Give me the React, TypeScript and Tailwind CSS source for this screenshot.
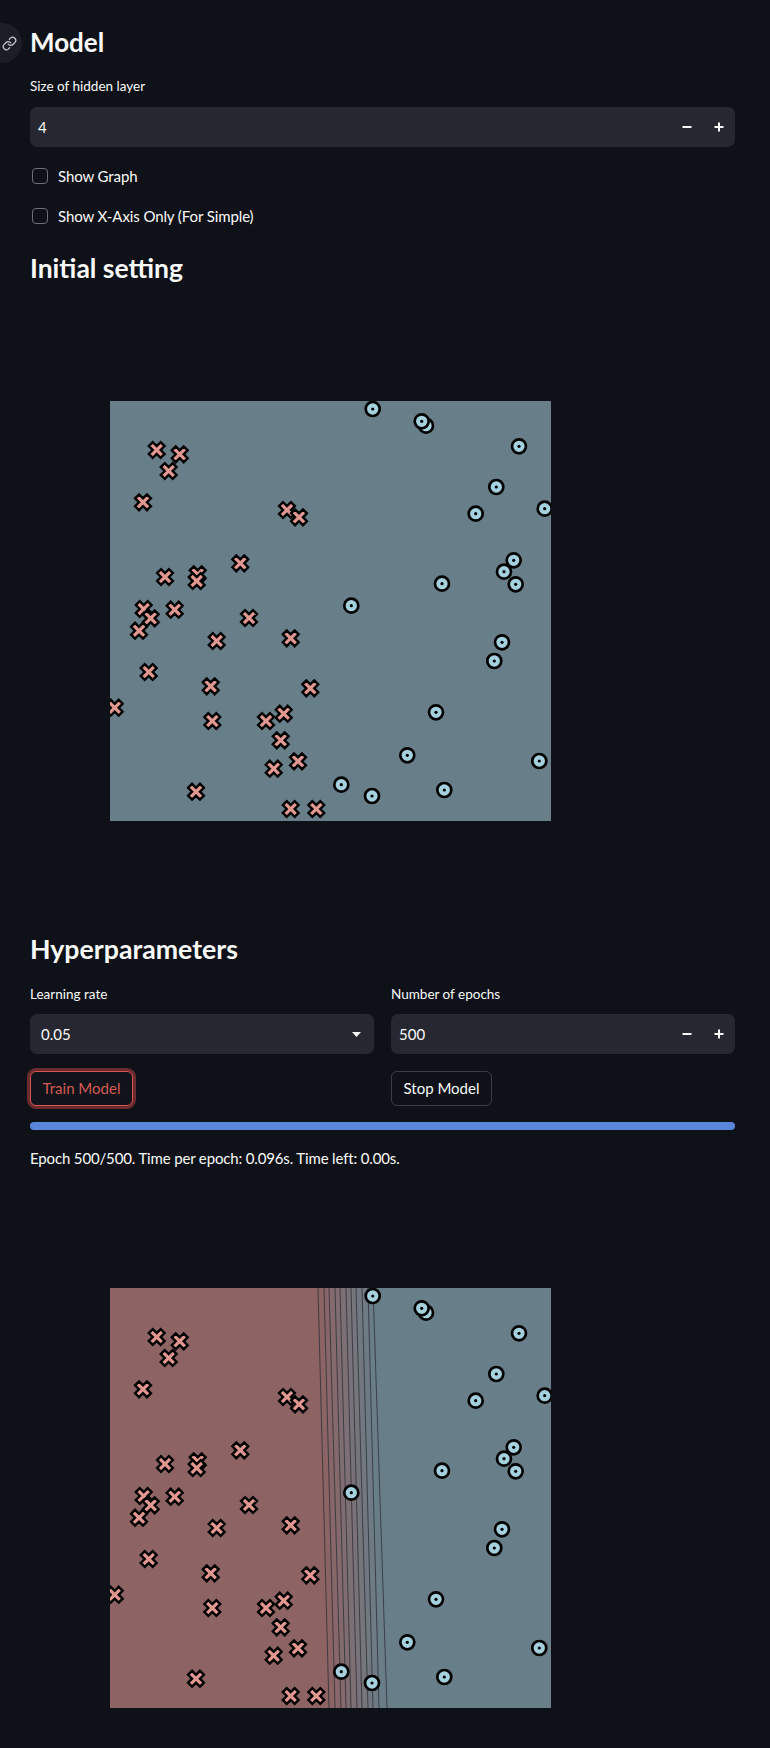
import React from "react";
import { Link } from "lucide-react";

const circles: [number, number][] = [
  [262.7, 8],
  [316, 24.7],
  [311.7, 20.3],
  [409, 45.3],
  [386.3, 86],
  [434.7, 107.7],
  [365.7, 112.7],
  [403.7, 159.3],
  [394, 170.7],
  [405.7, 183.3],
  [332, 182.7],
  [241.3, 204.7],
  [392, 241.3],
  [384.3, 260],
  [326, 311.3],
  [297.3, 354.3],
  [429.3, 360],
  [231.3, 383.7],
  [262, 395],
  [334.3, 389],
];

const crosses: [number, number][] = [
  [46.7, 49],
  [69.7, 53.3],
  [58.7, 70],
  [33, 101.3],
  [177, 109],
  [189, 116.3],
  [130.3, 162.3],
  [55, 176],
  [87.7, 173.3],
  [86.7, 180],
  [33.7, 208],
  [40.7, 217.3],
  [64.7, 208.7],
  [29, 229.7],
  [139, 217],
  [106.7, 240],
  [180.7, 237.3],
  [38.7, 271],
  [100.7, 285.3],
  [200.3, 287.3],
  [4.7, 306.7],
  [102.3, 320],
  [173.7, 312.7],
  [156, 320],
  [170.7, 339.3],
  [188, 360.3],
  [163.7, 367.7],
  [86, 390.7],
  [180.7, 408],
  [206.3, 408],
];

const R = 8.4;
const A = 2.8;
const plusPts: [number, number][] = [
  [-A, R], [A, R], [A, A], [R, A], [R, -A], [A, -A],
  [A, -R], [-A, -R], [-A, -A], [-R, -A], [-R, A], [-A, A],
];
const xPts = plusPts
  .map(([x, y]) => `${((x - y) / Math.SQRT2).toFixed(2)},${((x + y) / Math.SQRT2).toFixed(2)}`)
  .join(" ");

const TOP = [208, 214, 219, 225, 230, 236, 241, 246, 252, 258, 263];
const BOT = [219, 225, 231, 236, 241, 247, 252, 258, 263, 269, 277];
const RED = [141, 99, 99];
const BLUE = [104, 127, 138];
const mix = (t: number) =>
  `rgb(${RED.map((r, i) => Math.round(r + (BLUE[i] - r) * t)).join(",")})`;

function Plot({ boundary }: { boundary: boolean }) {
  const id = boundary ? "clipB" : "clipA";
  return (
    <svg width={441} height={420} viewBox="0 0 441 420" className="block">
      <defs>
        <clipPath id={id}>
          <rect x={0} y={0} width={441} height={420} />
        </clipPath>
      </defs>
      <g clipPath={`url(#${id})`}>
        <rect x={0} y={0} width={441} height={420} fill="#687f8a" />
        {boundary && (
          <g>
            <polygon points={`0,0 ${TOP[0]},0 ${BOT[0]},420 0,420`} fill={mix(0)} />
            {TOP.slice(0, -1).map((t, i) => (
              <polygon
                key={i}
                points={`${t},0 ${TOP[i + 1]},0 ${BOT[i + 1]},420 ${BOT[i]},420`}
                fill={mix((i + 0.5) / (TOP.length - 1))}
              />
            ))}
            {TOP.map((t, i) => (
              <line
                key={i}
                x1={t}
                y1={0}
                x2={BOT[i]}
                y2={420}
                stroke="rgba(35,35,40,0.75)"
                strokeWidth={0.9}
              />
            ))}
          </g>
        )}
        {crosses.map(([x, y], i) => (
          <polygon
            key={i}
            points={xPts}
            transform={`translate(${x},${y})`}
            fill="#e29891"
            stroke="#000"
            strokeWidth={2.4}
            strokeLinejoin="miter"
          />
        ))}
        {circles.map(([x, y], i) => (
          <g key={i}>
            <circle cx={x} cy={y} r={7} fill="#a5d1df" stroke="#000" strokeWidth={2.7} />
            <circle cx={x} cy={y} r={1.6} fill="#000" />
          </g>
        ))}
      </g>
    </svg>
  );
}

function Checkbox({ label }: { label: string }) {
  return (
    <div className="flex h-[24px] items-center gap-[10px]">
      <div className="ml-[2px] h-[16px] w-[16px] rounded-[4px] border border-[#6c6f78] bg-[#0e1117]" />
      <span className="text-[15px] leading-[24px] tracking-[-0.1px]">{label}</span>
    </div>
  );
}

function Stepper() {
  return (
    <div className="flex h-full items-center">
      <div className="flex h-full w-[32px] items-center justify-center">
        <svg width="10" height="10" viewBox="0 0 10 10">
          <rect x="0.5" y="4" width="9" height="2" fill="#fafafa" />
        </svg>
      </div>
      <div className="flex h-full w-[32px] items-center justify-center">
        <svg width="10" height="10" viewBox="0 0 10 10">
          <rect x="0.5" y="4" width="9" height="2" fill="#fafafa" />
          <rect x="4" y="0.5" width="2" height="9" fill="#fafafa" />
        </svg>
      </div>
    </div>
  );
}

export default function App() {
  return (
    <div className="relative min-h-[1748px] w-[770px] overflow-hidden bg-[#0e1117] font-['Lato','Noto_Sans',sans-serif] text-[#fafafa]">
      <div className="absolute left-[-18px] top-[23px] flex h-[40px] w-[40px] items-center justify-center rounded-full bg-[#1b1e26]">
        <Link size={15} strokeWidth={2} className="ml-[14px] text-[#c9cbd0]" />
      </div>
      <div className="flex w-[735px] flex-col pl-[30px]">
        <h2 className="mt-[22px] h-[40px] text-[26px] font-bold leading-[40px]">Model</h2>
        <div className="mt-[14px] h-[20px] text-[13.5px] leading-[20px]">Size of hidden layer</div>
        <div className="mt-[11px] flex h-[40px] items-center justify-between rounded-[7px] bg-[#262730]">
          <span className="pl-[8px] text-[15px]">4</span>
          <Stepper />
        </div>
        <div className="mt-[17px] flex flex-col gap-[16px]">
          <Checkbox label="Show Graph" />
          <Checkbox label="Show X-Axis Only (For Simple)" />
        </div>
        <h3 className="mt-[22px] h-[36px] text-[26.5px] font-bold leading-[36px]">Initial setting</h3>
        <div className="ml-[80px] mt-[115px]">
          <Plot boundary={false} />
        </div>
        <h2 className="mt-[108px] h-[40px] text-[26.7px] font-bold leading-[40px]">Hyperparameters</h2>
        <div className="mt-[15px] grid grid-cols-2 gap-x-[17px]">
          <div className="flex flex-col">
            <div className="h-[20px] text-[13.5px] leading-[20px]">Learning rate</div>
            <div className="mt-[10px] flex h-[40px] items-center justify-between rounded-[7px] bg-[#262730] pl-[11px] pr-[13px]">
              <span className="text-[15px]">0.05</span>
              <svg width="9" height="5" viewBox="0 0 9 5">
                <polygon points="0,0 9,0 4.5,5" fill="#fafafa" />
              </svg>
            </div>
            <div className="mt-[17px] flex">
              <button className="flex h-[35px] w-[103px] items-center justify-center rounded-[6px] border border-[#d9534f] bg-[#10131a] text-[15px] text-[#d65a54] shadow-[0_0_0_3px_rgba(170,60,60,0.6)]">
                Train Model
              </button>
            </div>
          </div>
          <div className="flex flex-col">
            <div className="h-[20px] text-[13.5px] leading-[20px]">Number of epochs</div>
            <div className="mt-[10px] flex h-[40px] items-center justify-between rounded-[7px] bg-[#262730]">
              <span className="pl-[8px] text-[15px]">500</span>
              <Stepper />
            </div>
            <div className="mt-[17px] flex">
              <button className="flex h-[35px] w-[101px] items-center justify-center rounded-[6px] border border-[#3b3d46] bg-[#0e1117] text-[15px] text-[#fafafa]">
                Stop Model
              </button>
            </div>
          </div>
        </div>
        <div className="mt-[16px] h-[8px] w-full rounded-full bg-[#5a86da]" />
        <div className="mt-[16px] h-[24px] text-[15px] leading-[24px] tracking-[-0.15px]">
          Epoch 500/500. Time per epoch: 0.096s. Time left: 0.00s.
        </div>
        <div className="ml-[80px] mt-[118px]">
          <Plot boundary={true} />
        </div>
        <div className="h-[40px]" />
      </div>
    </div>
  );
}
